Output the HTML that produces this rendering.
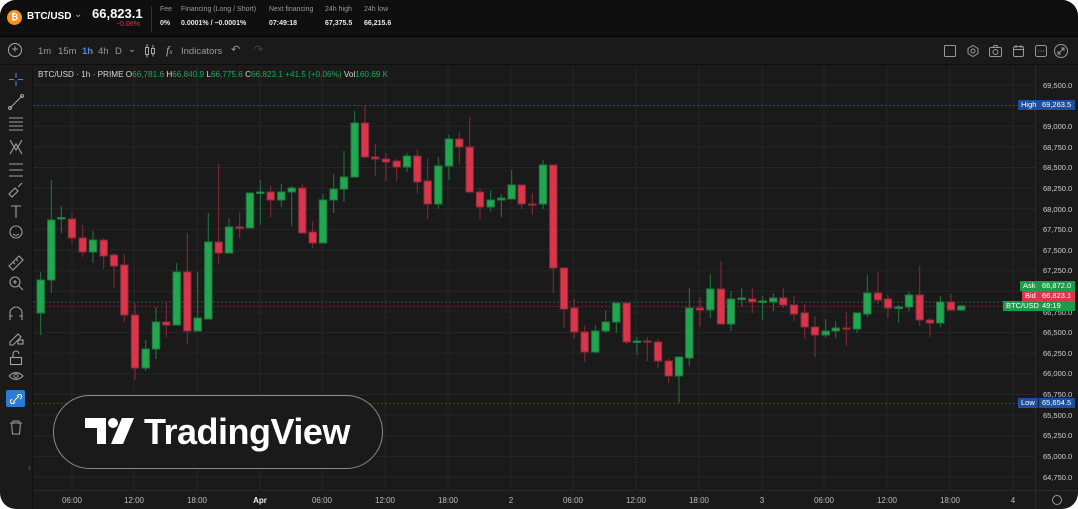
<!DOCTYPE html>
<html><head><meta charset="utf-8"><style>
*{margin:0;padding:0;box-sizing:border-box}
body{width:1078px;height:509px;background:#fff;overflow:hidden;font-family:"Liberation Sans",sans-serif}
.app{position:absolute;left:0;top:0;width:1078px;height:509px;background:#1a1a1a;border-radius:16px;overflow:hidden}
.hdr{position:absolute;left:0;top:0;width:1078px;height:37px;background:#0f0f0f;border-bottom:1px solid #000}
.t{position:absolute;white-space:nowrap}
.sm{font-size:7px;color:#9a9a9a}
.sv{font-size:7px;color:#e8e8e8;font-weight:bold}
.tb{font-size:9.5px;color:#9a9a9a}
.pl{position:absolute;left:1043px;font-size:7.5px;color:#cfcfcf}
.tl{position:absolute;top:496px;font-size:8px;color:#bdbdbd;transform:translateX(-50%)}
.lab{position:absolute;height:10px;font-size:7.5px;line-height:10px;color:#fff;padding:0 3px}
</style></head><body><div class="app">
<div class="hdr">
 <div style="position:absolute;left:7px;top:10px;width:15px;height:15px;border-radius:50%;background:#f7931a;color:#fff;font-size:9px;font-weight:bold;text-align:center;line-height:15px">₿</div>
 <div class="t" style="left:27px;top:11px;font-size:10px;font-weight:bold;color:#fff">BTC/USD</div>
 <div class="t" style="left:74px;top:9px;font-size:10px;color:#aaa">⌄</div>
 <div class="t" style="left:92px;top:6px;font-size:13px;font-weight:bold;color:#fff">66,823.1</div>
 <div class="t" style="left:116px;top:21px;font-size:7px;color:#e0304a">−0.06%</div>
 <div style="position:absolute;left:151px;top:6px;width:1px;height:26px;background:#333"></div>
 <div class="t sm" style="left:160px;top:6px">Fee</div><div class="t sv" style="left:160px;top:20px">0%</div>
 <div class="t sm" style="left:181px;top:6px">Financing (Long / Short)</div><div class="t sv" style="left:181px;top:20px">0.0001% / −0.0001%</div>
 <div class="t sm" style="left:269px;top:6px">Next financing</div><div class="t sv" style="left:269px;top:20px">07:49:18</div>
 <div class="t sm" style="left:325px;top:6px">24h high</div><div class="t sv" style="left:325px;top:20px">67,375.5</div>
 <div class="t sm" style="left:364px;top:6px">24h low</div><div class="t sv" style="left:364px;top:20px">66,215.6</div>
</div>
<div style="position:absolute;left:0;top:38px;width:1078px;height:27px;border-bottom:1px solid #0e0e0e"></div>
<div class="t" style="left:8px;top:43px;width:14px;height:14px;border:1px solid #aaa;border-radius:50%;color:#aaa;font-size:12px;line-height:11px;text-align:center">+</div>
<div class="t tb" style="left:38px;top:46px">1m</div>
<div class="t tb" style="left:58px;top:46px">15m</div>
<div class="t tb" style="left:82px;top:46px;color:#3b8fe0;font-weight:bold">1h</div>
<div class="t tb" style="left:98px;top:46px">4h</div>
<div class="t tb" style="left:115px;top:46px">D</div>
<div class="t tb" style="left:128px;top:44px">⌄</div>
<svg style="position:absolute;left:144px;top:44px" width="12" height="14"><g stroke="#aaa" fill="none"><rect x="1.5" y="3.5" width="3" height="7"/><rect x="7.5" y="4.5" width="3" height="5"/><path d="M3 0v3.5M3 10.5v3M9 1v3.5M9 9.5v3"/></g></svg>
<div class="t" style="left:166px;top:43px;font-size:12px;color:#aaa;font-style:italic;font-family:'Liberation Serif',serif">f<span style="font-size:7px">x</span></div>
<div class="t tb" style="left:181px;top:46px">Indicators</div>
<div class="t" style="left:231px;top:43px;font-size:11px;color:#999">↶</div>
<div class="t" style="left:254px;top:43px;font-size:11px;color:#444">↷</div>
<svg style="position:absolute;left:940px;top:43px" width="136" height="16"><g stroke="#999" fill="none" stroke-width="1"><rect x="4.5" y="2.5" width="11" height="11" rx="1"/><path d="M33 2.5l5 3v5l-5 3-5-3v-5z"/><circle cx="33" cy="8" r="2"/><rect x="49.5" y="4.5" width="12" height="9" rx="1.5"/><circle cx="55.5" cy="9" r="2.5"/><path d="M53 4.5l1-2h3l1 2"/><rect x="73.5" y="3.5" width="10" height="10" rx="1.5"/><path d="M73.5 6.5h10M76 2v3M81 2v3"/><rect x="95.5" y="2.5" width="11" height="11" rx="2"/><path d="M98 8h1M100.5 8h1M103 8h1"/><circle cx="121" cy="8" r="6.5"/><path d="M118 11l6-6M121 5h3v3M118 8v3h3"/></g></svg>
<div style="position:absolute;left:32px;top:66px;width:1px;height:443px;background:#111"></div>
<svg style="position:absolute;left:0;top:66px" width="32" height="380"><g stroke="#a0a0a0" fill="none" stroke-width="1.1">
<path d="M16 7v5M16 15v5M9 13.5h5M18 13.5h5" stroke="#3b8fe0"/>
<path d="M10 42l12-12"/><circle cx="10" cy="42" r="1.5"/><circle cx="22" cy="30" r="1.5"/>
<path d="M9 52h14M9 56h14M9 60h14M9 64h14"/>
<path d="M10 74l6 10 6-10M10 88l6-10 6 10"/>
<path d="M9 98h14M9 104h14M9 110h14"/>
<path d="M9 128l6-6 3 3-6 6zM18 121l4-4"/>
<path d="M11 140h10M16 140v12"/>
<circle cx="16" cy="166" r="6"/><path d="M13 168q3 3 6 0"/>
<path d="M9 200l10-10 4 4-10 10zM13 196l2 2M16 193l2 2"/>
<circle cx="15" cy="216" r="5"/><path d="M19 220l4 4M13 216h4M15 214v4"/>
<path d="M10 254v-7a6 6 0 0 1 12 0v7M10 250h3M19 250h3"/>
<path d="M10 276l8-8 3 3-8 8h-3z"/><rect x="18" y="274" width="5" height="4"/>
<rect x="10.5" y="291.5" width="11" height="7"/><path d="M13 291v-3a3 3 0 0 1 6 0"/>
<path d="M9 310q7-7 14 0q-7 7-14 0"/><circle cx="16" cy="310" r="2"/>
</g>
<rect x="6" y="324" width="19" height="17" rx="2" fill="#2a7ad8"/>
<path d="M13 336l6-6M12 333l-1 1a2 2 0 0 0 3 3l1-1M20 333l1-1a2 2 0 0 0-3-3l-1 1" stroke="#fff" fill="none"/>
<path d="M10 357h12M13 357v-2h6v2M11.5 357l1 11h7l1-11" stroke="#a0a0a0" fill="none"/>
</svg>
<div class="t" style="left:28px;top:463px;font-size:8px;color:#777">‹</div>
<div style="position:absolute;left:1035px;top:66px;width:1px;height:443px;background:#2a2a2a"></div>
<div style="position:absolute;left:33px;top:490px;width:1045px;height:1px;background:#2a2a2a"></div>
<svg style="position:absolute;left:33px;top:66px" width="1002" height="424">
<g stroke="#262626" stroke-width="1">
<path d="M0 19H1002M0 39.6H1002M0 60.3H1002M0 80.9H1002M0 101.5H1002M0 122.2H1002M0 142.8H1002M0 163.4H1002M0 184H1002M0 204.7H1002M0 225.3H1002M0 245.9H1002M0 266.6H1002M0 287.2H1002M0 307.9H1002M0 328.5H1002M0 349.1H1002M0 369.8H1002M0 390.4H1002M0 411H1002"/>
<path d="M39 0V424M101 0V424M164 0V424M227 0V424M289 0V424M352 0V424M415 0V424M478 0V424M540 0V424M603 0V424M666 0V424M729 0V424M791 0V424M854 0V424M917 0V424M980 0V424"/>
</g>
<g stroke-dasharray="2 2" stroke-width="1">
<path d="M0 39.5H1002" stroke="#27456e"/>
<path d="M0 337.5H1002" stroke="#27456e"/>
<path d="M0 236H1002" stroke="#1f5c35"/>
<path d="M0 240.5H1002" stroke="#6a2630"/>
</g>
</svg>
<svg style="position:absolute;left:0;top:0" width="1035" height="490">
<g stroke="#1d7a40" fill="#22a650">
<path d="M40.7 272V335M51.3 180V293M61.3 206V233M93 231V263M145.7 340V371M156 307V359M176.7 263V325M197.7 272V331M208.3 213V319M229 218V253M250 193V228M260.3 180V225M281.3 184V207M291.7 186V226M323 194V243M333.7 174V213M344 151V202M354.7 111V177M407 153V172M438.3 157V209M449 135V180M490.7 190V211M501.3 194V217M511.7 170V199M543 160V209M595.3 325V353M605.7 310V333M616.3 303V333M637 337V355M679 357V403M689.3 288V366M710.3 274V318M731 291V331M741.7 288V307M762.7 296V320M773.3 293V311M825.7 319V338M835.7 321V338M857 313V333M867.3 275V317M898.7 305V323M909 292V311M940.3 296V327M961.3 305V311"/>
<rect x="37" y="280" width="7.4" height="33"/><rect x="47.6" y="220" width="7.4" height="60"/><rect x="57.6" y="217.5" width="7.4" height="1.5"/><rect x="89.3" y="240" width="7.4" height="12"/><rect x="142" y="349" width="7.4" height="19"/><rect x="152.3" y="322" width="7.4" height="27"/><rect x="173" y="272" width="7.4" height="53"/><rect x="194" y="318" width="7.4" height="13"/><rect x="204.6" y="242" width="7.4" height="77"/><rect x="225.3" y="227" width="7.4" height="26"/><rect x="246.3" y="193" width="7.4" height="35"/><rect x="256.6" y="192" width="7.4" height="1.5"/><rect x="277.6" y="192" width="7.4" height="8"/><rect x="288" y="188" width="7.4" height="4"/><rect x="319.3" y="200" width="7.4" height="43"/><rect x="330" y="189" width="7.4" height="11"/><rect x="340.3" y="177" width="7.4" height="12"/><rect x="351" y="123" width="7.4" height="54"/><rect x="403.3" y="156" width="7.4" height="11"/><rect x="434.6" y="166" width="7.4" height="38"/><rect x="445.3" y="139" width="7.4" height="27"/><rect x="487" y="200" width="7.4" height="7"/><rect x="497.6" y="198" width="7.4" height="2"/><rect x="508" y="185" width="7.4" height="14"/><rect x="539.3" y="165" width="7.4" height="39"/><rect x="591.6" y="331" width="7.4" height="21"/><rect x="602" y="322" width="7.4" height="9"/><rect x="612.6" y="303" width="7.4" height="19"/><rect x="633.3" y="341" width="7.4" height="1.5"/><rect x="675.3" y="357" width="7.4" height="19"/><rect x="685.6" y="308" width="7.4" height="50"/><rect x="706.6" y="289" width="7.4" height="21"/><rect x="727.3" y="299" width="7.4" height="25"/><rect x="738" y="298" width="7.4" height="1.5"/><rect x="759" y="301" width="7.4" height="1.5"/><rect x="769.6" y="298" width="7.4" height="4"/><rect x="822" y="331" width="7.4" height="4"/><rect x="832" y="328" width="7.4" height="3"/><rect x="853.3" y="313" width="7.4" height="16"/><rect x="863.6" y="293" width="7.4" height="21"/><rect x="895" y="307" width="7.4" height="1.5"/><rect x="905.3" y="295" width="7.4" height="12"/><rect x="936.6" y="302" width="7.4" height="21"/><rect x="957.6" y="306" width="7.4" height="4"/>
</g>
<g stroke="#8a2a38" fill="#d9354b">
<path d="M72 213V243M82.7 225V257M103.7 238V269M114 253V288M124.3 254V322M135 303V380M166.3 301V337M187.3 233V344M218.7 164V264M239.7 212V238M270.7 186V217M302.3 184V233M312.7 221V248M365 105V158M375.3 144V176M386 153V181M396.7 159V181M417.3 149V193M427.7 158V219M459.3 132V164M469.7 117V194M480 188V219M521.7 185V209M532.3 193V215M553.3 165V293M564 268V328M574.3 299V339M584.7 325V362M626.7 303V344M647.3 337V361M658 339V368M668.7 358V383M700 297V327M721 261V324M752.3 288V313M783.3 288V308M794 296V321M804.7 304V339M815 316V357M846.3 312V346M878 272V304M888 295V318M919.7 266V326M930 318V337M951 294V311"/>
<rect x="68.3" y="219" width="7.4" height="19"/><rect x="79" y="238" width="7.4" height="14"/><rect x="100" y="240" width="7.4" height="16"/><rect x="110.3" y="255" width="7.4" height="11"/><rect x="120.6" y="265" width="7.4" height="50"/><rect x="131.3" y="315" width="7.4" height="53"/><rect x="162.6" y="322" width="7.4" height="3"/><rect x="183.6" y="272" width="7.4" height="59"/><rect x="215" y="242" width="7.4" height="11"/><rect x="236" y="227" width="7.4" height="1.5"/><rect x="267" y="192" width="7.4" height="8"/><rect x="298.6" y="188" width="7.4" height="45"/><rect x="309" y="232" width="7.4" height="11"/><rect x="361.3" y="123" width="7.4" height="34"/><rect x="371.6" y="157" width="7.4" height="2"/><rect x="382.3" y="159" width="7.4" height="3"/><rect x="393" y="161" width="7.4" height="6"/><rect x="413.6" y="156" width="7.4" height="26"/><rect x="424" y="181" width="7.4" height="23"/><rect x="455.6" y="139" width="7.4" height="8"/><rect x="466" y="147" width="7.4" height="45"/><rect x="476.3" y="192" width="7.4" height="15"/><rect x="518" y="185" width="7.4" height="19"/><rect x="528.6" y="204" width="7.4" height="1.2"/><rect x="549.6" y="165" width="7.4" height="103"/><rect x="560.3" y="268" width="7.4" height="41"/><rect x="570.6" y="308" width="7.4" height="24"/><rect x="581" y="332" width="7.4" height="20"/><rect x="623" y="303" width="7.4" height="39"/><rect x="643.6" y="341" width="7.4" height="1.2"/><rect x="654.3" y="342" width="7.4" height="19"/><rect x="665" y="361" width="7.4" height="15"/><rect x="696.3" y="308" width="7.4" height="2"/><rect x="717.3" y="289" width="7.4" height="35"/><rect x="748.6" y="299" width="7.4" height="3"/><rect x="779.6" y="298" width="7.4" height="7"/><rect x="790.3" y="305" width="7.4" height="9"/><rect x="801" y="313" width="7.4" height="14"/><rect x="811.3" y="327" width="7.4" height="8"/><rect x="842.6" y="328" width="7.4" height="1.2"/><rect x="874.3" y="293" width="7.4" height="7"/><rect x="884.3" y="299" width="7.4" height="9"/><rect x="916" y="295" width="7.4" height="25"/><rect x="926.3" y="320" width="7.4" height="3"/><rect x="947.3" y="302" width="7.4" height="8"/>
</g>
</svg>
<div class="t" style="left:38px;top:70px;font-size:8.2px;color:#d8d8d8">BTC/USD · 1h · PRIME O<span style="color:#22a650">66,781.6</span> H<span style="color:#22a650">66,840.9</span> L<span style="color:#22a650">66,775.6</span> C<span style="color:#22a650">66,823.1</span> <span style="color:#22a650">+41.5 (+0.06%)</span> Vol<span style="color:#22a650">160.69 K</span></div>
<div class="pl" style="top:81px">69,500.0</div>
<div class="pl" style="top:122px">69,000.0</div>
<div class="pl" style="top:143px">68,750.0</div>
<div class="pl" style="top:163px">68,500.0</div>
<div class="pl" style="top:184px">68,250.0</div>
<div class="pl" style="top:205px">68,000.0</div>
<div class="pl" style="top:225px">67,750.0</div>
<div class="pl" style="top:246px">67,500.0</div>
<div class="pl" style="top:266px">67,250.0</div>
<div class="pl" style="top:308px">66,750.0</div>
<div class="pl" style="top:328px">66,500.0</div>
<div class="pl" style="top:349px">66,250.0</div>
<div class="pl" style="top:369px">66,000.0</div>
<div class="pl" style="top:390px">65,750.0</div>
<div class="pl" style="top:411px">65,500.0</div>
<div class="pl" style="top:431px">65,250.0</div>
<div class="pl" style="top:452px">65,000.0</div>
<div class="pl" style="top:473px">64,750.0</div>
<div class="lab" style="left:1018px;top:100px;background:#1c4f9c">High</div>
<div class="lab" style="left:1039px;top:100px;width:36px;background:#1c4f9c">69,263.5</div>
<div class="lab" style="left:1020px;top:281px;background:#1e9a4a">Ask</div>
<div class="lab" style="left:1039px;top:281px;width:36px;background:#1e9a4a">66,872.0</div>
<div class="lab" style="left:1022px;top:291px;background:#d9354b">Bid</div>
<div class="lab" style="left:1039px;top:291px;width:36px;background:#d9354b">66,823.1</div>
<div class="lab" style="left:1003px;top:301px;background:#1e9a4a">BTC/USD</div>
<div class="lab" style="left:1039px;top:301px;width:36px;background:#1e9a4a">49:19</div>
<div class="lab" style="left:1018px;top:398px;background:#1c4f9c">Low</div>
<div class="lab" style="left:1039px;top:398px;width:36px;background:#1c4f9c">65,654.5</div>
<div class="tl" style="left:72px">06:00</div><div class="tl" style="left:134px">12:00</div><div class="tl" style="left:197px">18:00</div><div class="tl" style="left:260px;font-weight:bold;color:#eee">Apr</div><div class="tl" style="left:322px">06:00</div><div class="tl" style="left:385px">12:00</div><div class="tl" style="left:448px">18:00</div><div class="tl" style="left:511px">2</div><div class="tl" style="left:573px">06:00</div><div class="tl" style="left:636px">12:00</div><div class="tl" style="left:699px">18:00</div><div class="tl" style="left:762px">3</div><div class="tl" style="left:824px">06:00</div><div class="tl" style="left:887px">12:00</div><div class="tl" style="left:950px">18:00</div><div class="tl" style="left:1013px">4</div>
<div class="t" style="left:1052px;top:495px;width:10px;height:10px;border:1px solid #999;border-radius:50%"></div>
<div style="position:absolute;left:53px;top:395px;width:330px;height:74px;border:1px solid #8a8a8a;border-radius:37px;background:#1a1a1a"></div>
<svg style="position:absolute;left:84px;top:417px" width="52" height="28"><path d="M1 1h21v26h-9V11H1z" fill="#fff"/><circle cx="29" cy="6" r="5" fill="#fff"/><path d="M38 1h12L39 27H27z" fill="#fff"/></svg>
<div class="t" style="left:144px;top:411px;font-size:36px;font-weight:bold;color:#fff;letter-spacing:-0.5px">TradingView</div>
</div></body></html>
